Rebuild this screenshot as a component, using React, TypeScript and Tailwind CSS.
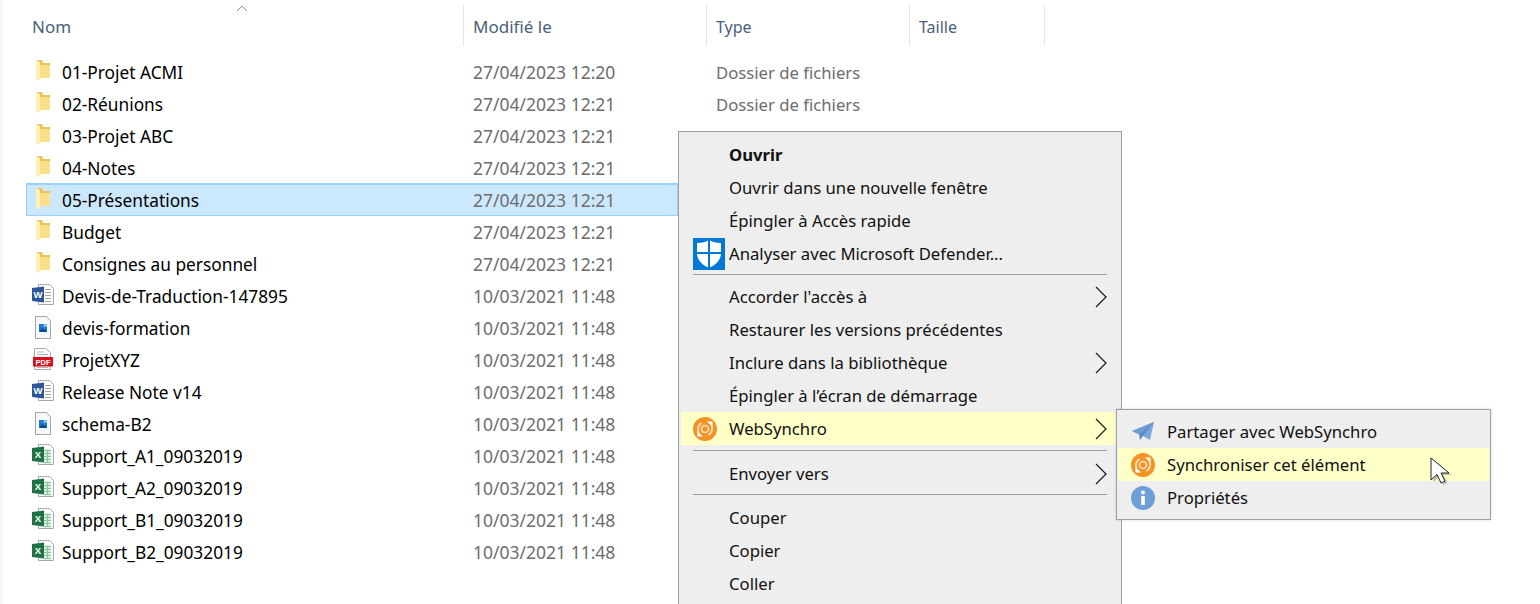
import React from "react";

type FileKind = "folder" | "word" | "image" | "pdf" | "excel";

const files: { name: string; date: string; type?: string; kind: FileKind }[] = [
  { name: "01-Projet ACMI", date: "27/04/2023 12:20", type: "Dossier de fichiers", kind: "folder" },
  { name: "02-Réunions", date: "27/04/2023 12:21", type: "Dossier de fichiers", kind: "folder" },
  { name: "03-Projet ABC", date: "27/04/2023 12:21", type: "Dossier de fichiers", kind: "folder" },
  { name: "04-Notes", date: "27/04/2023 12:21", kind: "folder" },
  { name: "05-Présentations", date: "27/04/2023 12:21", kind: "folder" },
  { name: "Budget", date: "27/04/2023 12:21", kind: "folder" },
  { name: "Consignes au personnel", date: "27/04/2023 12:21", kind: "folder" },
  { name: "Devis-de-Traduction-147895", date: "10/03/2021 11:48", kind: "word" },
  { name: "devis-formation", date: "10/03/2021 11:48", kind: "image" },
  { name: "ProjetXYZ", date: "10/03/2021 11:48", kind: "pdf" },
  { name: "Release Note v14", date: "10/03/2021 11:48", kind: "word" },
  { name: "schema-B2", date: "10/03/2021 11:48", kind: "image" },
  { name: "Support_A1_09032019", date: "10/03/2021 11:48", kind: "excel" },
  { name: "Support_A2_09032019", date: "10/03/2021 11:48", kind: "excel" },
  { name: "Support_B1_09032019", date: "10/03/2021 11:48", kind: "excel" },
  { name: "Support_B2_09032019", date: "10/03/2021 11:48", kind: "excel" },
];

const FileIcon = ({ kind }: { kind: FileKind }) => {
  if (kind === "folder") {
    return (
      <svg width="24" height="24" viewBox="0 0 24 24">
        <path d="M5 0h6l1 3h7v15H5z" fill="#eec15a" />
        <path d="M9 5h10v13H9z" fill="#fcdf8a" />
        <path d="M5 0l4 2v19l-4-1z" fill="#fff0b5" />
      </svg>
    );
  }
  if (kind === "image") {
    return (
      <svg width="24" height="24" viewBox="0 0 24 24">
        <path d="M4.500 0.500h11l4 4v18h-15z" fill="#f7f8fa" stroke="#a3a3a3" />
        <path d="M8 8h8v8H8z" fill="#1e78d0" />
        <path d="M8 16l3-4 2 2 1-1 2 3z" fill="#0c4a8c" />
        <path d="M12.500 8H16v3h-3.500z" fill="#7ec0f0" />
      </svg>
    );
  }
  if (kind === "pdf") {
    return (
      <svg width="24" height="24" viewBox="0 0 24 24">
        <path d="M3.500 0.500h11l5 4v17h-16z" fill="#fff" stroke="#a8a8a8" />
        <path d="M6 4h7M6 6.500h11M6 19.500h11" stroke="#b5b5b5" />
        <rect x="2" y="9" width="20" height="9.500" fill="#d9101c" />
        <text x="12" y="16.500" textAnchor="middle" fontSize="7.500" fontWeight="700" fill="#fff" fontFamily="Liberation Sans, sans-serif">PDF</text>
      </svg>
    );
  }
  const excel = kind === "excel";
  return (
    <svg width="24" height="24" viewBox="0 0 24 24">
      <path d="M7.500 0.500h11l4 4v16h-15z" fill="#fff" stroke="#a8a8a8" />
      {excel ? (
        <path d="M13 6.500h7M13 9.500h7M13 12.500h7M13 15.500h7M13 18.500h7M16.500 6v13" stroke="#8cc6a0" strokeWidth="1.500" />
      ) : (
        <path d="M14 5.500h6M14 8.500h6M14 11.500h6M14 14.500h6M14 17.500h6" stroke="#a3a3a3" />
      )}
      <path d="M1 4l12-1.500v16L1 17z" fill={excel ? "#1f7244" : "#2b579a"} />
      <text x="7" y="14" textAnchor="middle" fontSize="9.500" fontWeight="700" fill="#fff" fontFamily="Liberation Sans, sans-serif">
        {excel ? "X" : "W"}
      </text>
    </svg>
  );
};

const SyncIcon = () => (
  <svg width="24" height="24" viewBox="0 0 24 24">
    <circle cx="12" cy="12" r="12" fill="#f39325" />
    <circle cx="12" cy="12" r="3.500" fill="none" stroke="#fde3c4" strokeWidth="1.600" />
    <path d="M5.500 15.500a7.500 7.500 0 0 1 3-9.500" fill="none" stroke="#fde3c4" strokeWidth="1.800" />
    <path d="M18.500 8.500a7.500 7.500 0 0 1-3 9.500" fill="none" stroke="#fde3c4" strokeWidth="1.800" />
    <path d="M14 4.500h5.500V10zM10 19.500H4.500V14z" fill="#fff" />
  </svg>
);

const DefenderIcon = () => (
  <svg width="32" height="32" viewBox="0 0 32 32" className="block">
    <rect width="32" height="32" fill="#0078d7" />
    <path d="M16 2c3 2 7 3 12 3v10c0 7-5 12-12 15C9 27 4 22 4 15V5c5 0 9-1 12-3z" fill="#fff" />
    <path d="M15 2h2v28h-2zM4 14h24v2H4z" fill="#0078d7" />
  </svg>
);

const PlaneIcon = () => (
  <svg width="24" height="24" viewBox="0 0 24 24">
    <path d="M1 11L23 2l-4 18-7-4z" fill="#7ea8dc" />
    <path d="M1 11L23 2 8 14.500z" fill="#6d9bd6" />
    <path d="M8 14.500L23 2 12 16l-3 4z" fill="#5a8bc8" />
  </svg>
);

const InfoIcon = () => (
  <svg width="24" height="24" viewBox="0 0 24 24">
    <circle cx="12" cy="12" r="12" fill="#6f9fd8" />
    <circle cx="12" cy="6.500" r="2" fill="#fff" />
    <rect x="10.200" y="10" width="3.600" height="9" fill="#fff" />
  </svg>
);

const Chevron = () => (
  <svg width="12" height="22" viewBox="0 0 12 22" className="shrink-0">
    <path d="M1 1l10 10L1 21" fill="none" stroke="#1a1a1a" strokeWidth="1.200" />
  </svg>
);

const MenuRow = ({
  label,
  icon,
  bold,
  arrow,
  active,
}: {
  label: string;
  icon?: React.ReactNode;
  bold?: boolean;
  arrow?: boolean;
  active?: boolean;
}) => (
  <div className={`flex h-[33px] items-center pl-[12px] pr-[14px] ${active ? "bg-[#ffffc8]" : ""}`}>
    <div className="flex w-[36px] shrink-0 items-center">{icon}</div>
    <span className={`flex-1 pt-px ${bold ? "font-bold" : ""}`}>{label}</span>
    {arrow && <Chevron />}
  </div>
);

const App = () => {
  return (
    <div className="relative h-[604px] w-[1540px] overflow-hidden border-l-[3px] border-[#f6f6f6] bg-white font-['Noto_Sans',sans-serif] text-[17.3px] text-black">
      {/* column headers */}
      <div className="relative mt-[5px] flex h-[41px] items-center text-[#4c607a]">
        <div className="flex h-full w-[461px] items-center border-r border-[#e5e5e5] pl-[29px] pt-[3px] text-[17px]">Nom</div>
        <div className="flex h-full w-[243px] items-center border-r border-[#e5e5e5] pl-[9px] pt-[3px] text-[17px]">Modifié le</div>
        <div className="flex h-full w-[203px] items-center border-r border-[#e5e5e5] pl-[9px] pt-[3px] text-[16px]">Type</div>
        <div className="flex h-full w-[135px] items-center border-r border-[#e5e5e5] pl-[9px] pt-[3px] text-[16px]">Taille</div>
        <svg width="12" height="7" viewBox="0 0 12 7" className="absolute left-[233px] top-0">
          <path d="M1 6l5-5 5 5" fill="none" stroke="#8a8a8a" />
        </svg>
      </div>

      {/* file list */}
      <div className="mt-[10px] ml-[23px] w-[652px]">
        {files.map((file) => (
          <div
            key={file.name}
            className={`flex h-[32px] items-center ${file.name === "05-Présentations" ? "bg-[#cce8ff] shadow-[0_0_0_1px_#99d1ff_inset,0_-1px_0_#99d1ff]" : ""}`}
          >
            <div className="flex w-[36px] shrink-0 justify-end pr-[7px]">
              <FileIcon kind={file.kind} />
            </div>
            <div className="w-[411px] shrink-0 whitespace-nowrap pt-px">{file.name}</div>
            <div className="w-[243px] shrink-0 whitespace-nowrap pt-px text-[17.5px] text-[#6d6d6d]">{file.date}</div>
            {file.type && <div className="shrink-0 whitespace-nowrap pt-px text-[16.7px] text-[#6d6d6d]">{file.type}</div>}
          </div>
        ))}
      </div>

      {/* context menu */}
      <div className="absolute left-[675px] top-[131px] w-[444px] border border-[#a0a0a0] bg-[#eeeeee] pb-[20px] pl-[2px] pt-[6px] text-[16.7px] text-[#111111]">
        <MenuRow label="Ouvrir" bold />
        <MenuRow label="Ouvrir dans une nouvelle fenêtre" />
        <MenuRow label="Épingler à Accès rapide" />
        <MenuRow label="Analyser avec Microsoft Defender..." icon={<DefenderIcon />} />
        <div className="mb-[5px] ml-[12px] mr-[14px] mt-[4px] h-px bg-[#a0a0a0]" />
        <MenuRow label="Accorder l'accès à" arrow />
        <MenuRow label="Restaurer les versions précédentes" />
        <MenuRow label="Inclure dans la bibliothèque" arrow />
        <MenuRow label="Épingler à l’écran de démarrage" />
        <MenuRow label="WebSynchro" icon={<SyncIcon />} arrow active />
        <div className="mb-[6px] ml-[12px] mr-[14px] mt-[5px] h-px bg-[#a0a0a0]" />
        <MenuRow label="Envoyer vers" arrow />
        <div className="mb-[6px] ml-[12px] mr-[14px] mt-[4px] h-px bg-[#a0a0a0]" />
        <MenuRow label="Couper" />
        <MenuRow label="Copier" />
        <MenuRow label="Coller" />
      </div>

      {/* WebSynchro submenu */}
      <div className="absolute left-[1113px] top-[409px] w-[375px] border border-[#a0a0a0] bg-[#eeeeee] px-px py-[5px] text-[16.7px] text-[#111111] shadow-[0_0_3px_rgba(0,0,0,0.15)]">
        <div className="flex h-[33px] items-center pl-[13px]">
          <div className="w-[36px]"><PlaneIcon /></div>
          <span className="pt-px">Partager avec WebSynchro</span>
        </div>
        <div className="flex h-[33px] items-center bg-[#ffffc8] pl-[13px]">
          <div className="w-[36px]"><SyncIcon /></div>
          <span className="pt-px">Synchroniser cet élément</span>
        </div>
        <div className="flex h-[33px] items-center pl-[13px]">
          <div className="w-[36px]"><InfoIcon /></div>
          <span className="pt-px">Propriétés</span>
        </div>
      </div>

      {/* mouse pointer */}
      <svg width="26" height="34" viewBox="0 0 26 34" className="absolute left-[1427px] top-[457px]">
        <path d="M3.500 3v22l6-5.500 4 8.500 4-2-4-8h8z" fill="#777" opacity="0.45" />
        <path d="M1 1v22l6-5.500 4 8.500 4-2-4-8h8z" fill="#fff" stroke="#222" strokeWidth="1" />
      </svg>
    </div>
  );
};

export default App;
